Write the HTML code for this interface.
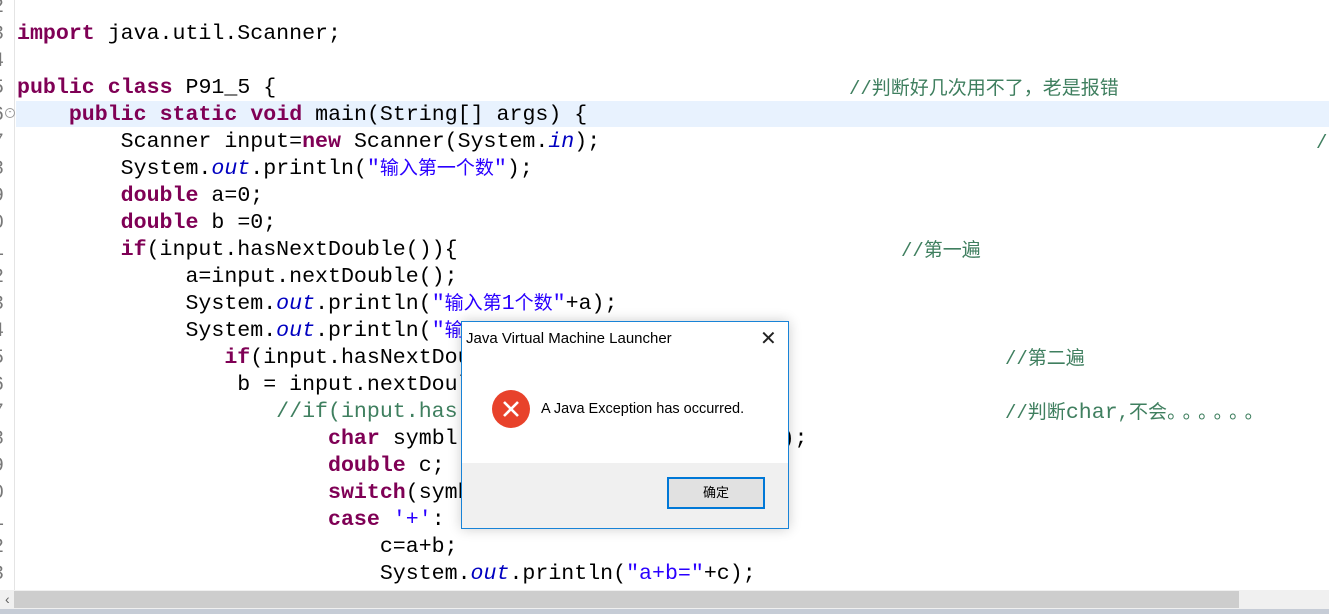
<!DOCTYPE html>
<html><head><meta charset="utf-8"><style>
body{margin:0;width:1329px;height:614px;overflow:hidden;background:#fff;position:relative;font-family:"Liberation Mono","Noto Sans CJK SC",monospace}
.l{position:absolute;left:17px;height:27px;line-height:27px;font-size:21.6px;white-space:pre;color:#000;margin-top:2px}
.n{position:absolute;left:-8px;font-size:20px;color:#787878;height:27px;line-height:27px;margin-top:2px}
.c{position:absolute;font-size:19px;color:#3f7f5f;white-space:pre;height:27px;line-height:27px;margin-top:3px;font-family:"Liberation Mono","Noto Sans CJK SC",monospace}
.k{color:#7f0055;font-weight:bold}.s{color:#2a00ff}.i{color:#0000c0;font-style:italic}
.sc{font-family:"Liberation Mono","Noto Sans CJK SC",monospace;font-size:19px}
</style></head><body>
<div style="position:absolute;left:14px;top:0;width:1px;height:590px;background:#e4e4e4"></div>
<div style="position:absolute;left:16px;top:101px;width:1313px;height:26px;background:#e8f2fe"></div>
<div class="n" style="top:-8px">2</div><div class="n" style="top:19px">3</div><div class="n" style="top:46px">4</div><div class="n" style="top:73px">5</div><div class="n" style="top:100px">6</div><div class="n" style="top:127px">7</div><div class="n" style="top:154px">8</div><div class="n" style="top:181px">9</div><div class="n" style="top:208px">0</div><div class="n" style="top:235px">1</div><div class="n" style="top:262px">2</div><div class="n" style="top:289px">3</div><div class="n" style="top:316px">4</div><div class="n" style="top:343px">5</div><div class="n" style="top:370px">6</div><div class="n" style="top:397px">7</div><div class="n" style="top:424px">8</div><div class="n" style="top:451px">9</div><div class="n" style="top:478px">0</div><div class="n" style="top:505px">1</div><div class="n" style="top:532px">2</div><div class="n" style="top:559px">3</div>
<div style="position:absolute;left:5px;top:108px;width:8px;height:8px;border:1px solid #999;border-radius:50%;font-size:8px;line-height:8px;text-align:center;color:#666">-</div>
<div class="l" style="top:19px"><span class="k">import</span> java.util.Scanner;</div>
<div class="l" style="top:73px"><span class="k">public</span> <span class="k">class</span> P91_5 {</div>
<div class="c" style="top:73px;left:849px">//判断好几次用不了，老是报错</div>
<div class="l" style="top:100px">    <span class="k">public</span> <span class="k">static</span> <span class="k">void</span> main(String[] args) {</div>
<div class="l" style="top:127px">        Scanner input=<span class="k">new</span> Scanner(System.<span class="i">in</span>);</div>
<div class="c" style="top:127px;left:1316px">/</div>
<div class="l" style="top:154px">        System.<span class="i">out</span>.println(<span class="s">"<span class="sc">输入第一个数</span>"</span>);</div>
<div class="l" style="top:181px">        <span class="k">double</span> a=0;</div>
<div class="l" style="top:208px">        <span class="k">double</span> b =0;</div>
<div class="l" style="top:235px">        <span class="k">if</span>(input.hasNextDouble()){</div>
<div class="c" style="top:235px;left:901px">//第一遍</div>
<div class="l" style="top:262px">             a=input.nextDouble();</div>
<div class="l" style="top:289px">             System.<span class="i">out</span>.println(<span class="s">"<span class="sc">输入第</span>1<span class="sc">个数</span>"</span>+a);</div>
<div class="l" style="top:316px">             System.<span class="i">out</span>.println(<span class="s">"<span class="sc">输</span></span></div>
<div class="l" style="top:343px">                <span class="k">if</span>(input.hasNextDou</div>
<div class="c" style="top:343px;left:1005px">//第二遍</div>
<div class="l" style="top:370px">                 b = input.nextDoul</div>
<div class="l" style="top:397px;color:#3f7f5f">                    //if(input.has</div>
<div class="c" style="top:397px;left:1005px">//判断<span style="font-size:21.6px">char</span>,不会<span style="letter-spacing:6px">。。。。。。</span></div>
<div class="l" style="top:424px">                        <span class="k">char</span> symbl                         );</div>
<div class="l" style="top:451px">                        <span class="k">double</span> c;</div>
<div class="l" style="top:478px">                        <span class="k">switch</span>(symb</div>
<div class="l" style="top:505px">                        <span class="k">case</span> <span class="s">'+'</span>:</div>
<div class="l" style="top:532px">                            c=a+b;</div>
<div class="l" style="top:559px">                            System.<span class="i">out</span>.println(<span class="s">"a+b="</span>+c);</div>
<div style="position:absolute;left:0;top:590px;width:1329px;height:19px;background:#f0f0f0"></div>
<div style="position:absolute;left:14px;top:591px;width:1225px;height:17px;background:#cdcdcd"></div>
<div style="position:absolute;left:5px;top:590px;font:14px 'Liberation Sans',sans-serif;color:#606060;line-height:19px">&lsaquo;</div>
<div style="position:absolute;left:0;top:609px;width:1329px;height:5px;background:#c6ccd6"></div>
<div style="position:absolute;left:461px;top:321px;width:326px;height:206px;border:1px solid #1883d7;background:#fff;box-shadow:0 0 12px rgba(0,0,0,.2);font-family:'Liberation Sans','Noto Sans CJK SC',sans-serif">
<div style="position:absolute;left:4px;top:8px;font-size:15px;color:#000">Java Virtual Machine Launcher</div>
<div style="position:absolute;left:298px;top:4px;font-size:20px;color:#222">&#x2715;</div>
<div style="position:absolute;left:30px;top:68px;width:38px;height:38px;border-radius:50%;background:#e8422b"></div>
<svg style="position:absolute;left:30px;top:68px" width="38" height="38"><path d="M12 12L26 26M26 12L12 26" stroke="#fff" stroke-width="2.6"/></svg>
<div style="position:absolute;left:79px;top:79px;font-size:14.5px;color:#000">A Java Exception has occurred.</div>
<div style="position:absolute;left:0;top:141px;width:326px;height:65px;background:#f0f0f0"></div>
<div style="position:absolute;left:205px;top:155px;width:94px;height:28px;border:2px solid #0078d7;background:#e1e1e1;font-size:13px;text-align:center;line-height:28px">确定</div>
</div>
</body></html>
